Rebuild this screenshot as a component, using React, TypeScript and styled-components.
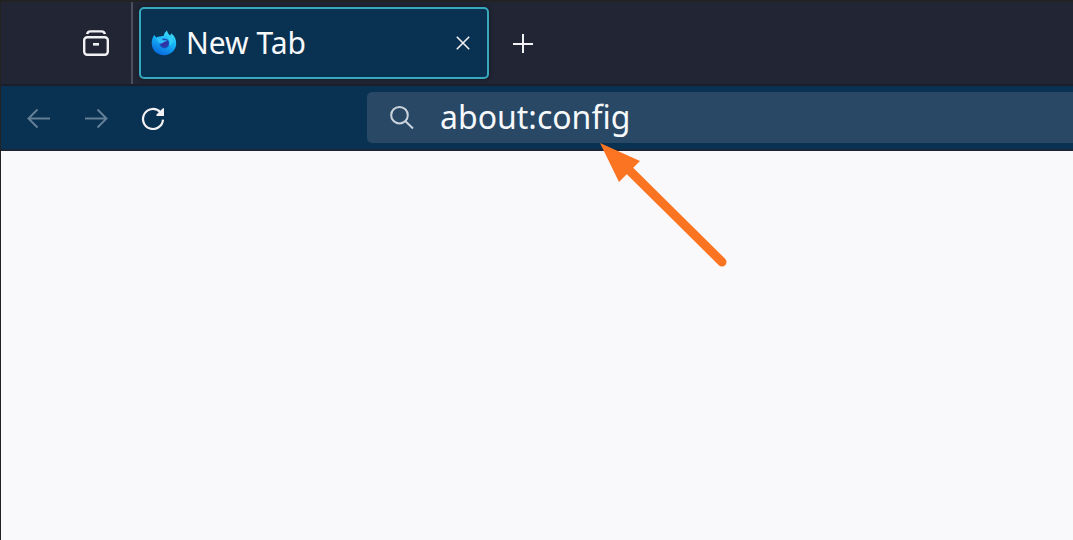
import React from "react";
import styled, { createGlobalStyle } from "styled-components";

const GlobalStyle = createGlobalStyle`
  *, *::before, *::after { box-sizing: border-box; }
  body {
    margin: 0;
    background: #f9f9fb;
    font-family: "Noto Sans", "Open Sans", sans-serif;
  }
`;

const Browser = styled.div`
  position: relative;
  display: flex;
  flex-direction: column;
  min-height: 100vh;
  overflow: hidden;
  border-top: 2px solid #222222;
  border-left: 1px solid #222222;
`;

const TabStrip = styled.header`
  display: flex;
  align-items: center;
  height: 84px;
  background: #212534;
  border-bottom: 2px solid #1a1e2b;
`;

const RecentArea = styled.div`
  display: flex;
  align-items: center;
  align-self: stretch;
  justify-content: flex-end;
  width: 132px;
  padding-right: 19px;
  border-right: 2px solid #4b4e5b;
`;

const IconButton = styled.button<{ $dim?: boolean }>`
  display: flex;
  align-items: center;
  justify-content: center;
  flex: none;
  width: 32px;
  height: 32px;
  padding: 0;
  border: 0;
  background: none;
  color: ${(p) => (p.$dim ? "#637f96" : "#f2f2f5")};
`;

const Tab = styled.div`
  display: flex;
  align-items: center;
  width: 350px;
  height: 72px;
  margin: 0 18px 0 6px;
  padding: 0 8px 0 10px;
  border: 2px solid #37a9bf;
  border-radius: 5px;
  background: #083152;
  box-shadow: 0 0 4px #141824;
`;

const TabTitle = styled.span`
  flex: 1;
  margin-left: 9px;
  color: #f6f8fa;
  font-size: 30px;
  line-height: 40px;
  white-space: nowrap;
`;

const Toolbar = styled.nav`
  display: flex;
  align-items: center;
  height: 65px;
  padding-left: 22px;
  background: #083152;
  border-bottom: 2px solid #1b2639;
`;

const NavButtons = styled.div`
  display: flex;
  flex: none;
  gap: 25px;
  width: 344px;
`;

const AddressBar = styled.label`
  display: flex;
  align-items: center;
  flex: 1;
  min-width: 0;
  height: 51px;
  padding-left: 19px;
  border-radius: 5px 0 0 5px;
  background: #284866;
  color: #cbd3dc;
`;

const AddressInput = styled.input`
  flex: 1;
  min-width: 0;
  height: 44px;
  margin: 0 0 2px 22px;
  padding: 0;
  border: 0;
  outline: 0;
  background: none;
  color: #f6f8fa;
  font-family: inherit;
  font-size: 32px;
  line-height: 44px;
`;

const Page = styled.main`
  flex: 1;
  background: #f9f9fb;
`;

const Pointer = styled.svg`
  position: absolute;
  top: 138px;
  left: 597px;
  pointer-events: none;
`;

const RecentIcon = () => (
  <svg width="32" height="32" viewBox="0 0 32 32" fill="none" stroke="currentColor" strokeWidth="2.4" aria-hidden="true">
    <path d="M7.2 7.2C7.4 5.2 8.6 4.4 10.4 4.4H21.6C23.4 4.4 24.6 5.2 24.8 7.2" />
    <rect x="4.2" y="10.2" width="23.6" height="17.6" rx="3" />
    <path d="M13 17.3H19" strokeWidth="2.6" />
  </svg>
);

const BrowserLogo = () => (
  <svg width="26" height="26" viewBox="0 0 26 26" aria-hidden="true">
    <defs>
      <linearGradient id="flame" x1="0.8" y1="0" x2="0.35" y2="1">
        <stop offset="0" stopColor="#47e4f6" />
        <stop offset="0.45" stopColor="#16b4f7" />
        <stop offset="1" stopColor="#0868dc" />
      </linearGradient>
      <radialGradient id="core">
        <stop offset="0" stopColor="#3f2ba8" />
        <stop offset="0.6" stopColor="#2a35a4" />
        <stop offset="1" stopColor="#1460c4" />
      </radialGradient>
    </defs>
    <path d="M3.4 5L5.2 7.6C6.6 6.6 8 6.3 9.4 6.5C10.6 6 11.6 5.9 12.6 6C13 4 14 2 16 .6C16.3 2.8 17.6 4.2 19.2 5.6C19.8 4.8 20 4 20 3.2C23.6 5.6 25.4 9.6 25.2 13.8C24.9 20.4 19.6 25.2 13 25.2C6.2 25.2 1 20.2 .7 13.7C.6 10.4 1.4 7.2 3.4 5Z" fill="url(#flame)" />
    <circle cx="13.4" cy="13.4" r="5" fill="url(#core)" />
    <path d="M5 8.6C7.8 7 10.8 8.2 12 10.2H15.8C15.2 11.9 13.2 11.5 12.2 12.6C11 14.2 9.4 13.2 8.2 13.6Z" fill="#2cbdf8" />
    <path d="M14.4 5.8C18.6 7.6 19.8 12 18 15.8C20.3 15 21.7 13 22 10.5C20.4 8.2 17.7 6.7 14.4 5.8Z" fill="#31cdf4" />
  </svg>
);

const CloseIcon = () => (
  <svg width="14" height="14" viewBox="0 0 14 14" stroke="currentColor" strokeWidth="1.6" aria-hidden="true">
    <path d="M.8 .8L13.2 13.2M13.2 .8L.8 13.2" />
  </svg>
);

const PlusIcon = () => (
  <svg width="20" height="20" viewBox="0 0 20 20" stroke="currentColor" strokeWidth="2" aria-hidden="true">
    <path d="M10 1V20M0 11H20" />
  </svg>
);

const ArrowIcon = ({ forward }: { forward?: boolean }) => (
  <svg width="24" height="24" viewBox="0 0 24 24" fill="none" stroke="currentColor" strokeWidth="2" aria-hidden="true">
    <path d={forward ? "M1 12.5H22M13.5 3.5L22.5 12.5L13.5 21.5" : "M23 12.5H2M10.5 3.5L1.5 12.5L10.5 21.5"} />
  </svg>
);

const ReloadIcon = () => (
  <svg width="24" height="24" viewBox="0 0 24 24" fill="none" stroke="currentColor" strokeWidth="2.2" aria-hidden="true">
    <path d="M19.4 6.2A10 10 0 1 0 22 13.6" />
    <path d="M23 2V10H16.4C15.3 10 15 9 15.8 8.2L21.6 2.4Z" fill="currentColor" stroke="none" />
  </svg>
);

const SearchIcon = () => (
  <svg width="32" height="32" viewBox="0 0 32 32" fill="none" stroke="currentColor" strokeWidth="2" aria-hidden="true">
    <circle cx="13.5" cy="13.2" r="8.3" />
    <path d="M19.5 19.2L27 26.5" />
  </svg>
);

export default function App() {
  return (
    <Browser>
      <GlobalStyle />
      <TabStrip>
        <RecentArea>
          <IconButton type="button" aria-label="Recent browsing">
            <RecentIcon />
          </IconButton>
        </RecentArea>
        <Tab>
          <BrowserLogo />
          <TabTitle>New Tab</TabTitle>
          <IconButton type="button" aria-label="Close tab">
            <CloseIcon />
          </IconButton>
        </Tab>
        <IconButton type="button" aria-label="Open a new tab">
          <PlusIcon />
        </IconButton>
      </TabStrip>
      <Toolbar aria-label="Navigation">
        <NavButtons>
          <IconButton type="button" aria-label="Back" $dim>
            <ArrowIcon />
          </IconButton>
          <IconButton type="button" aria-label="Forward" $dim>
            <ArrowIcon forward />
          </IconButton>
          <IconButton type="button" aria-label="Reload">
            <ReloadIcon />
          </IconButton>
        </NavButtons>
        <AddressBar>
          <SearchIcon />
          <AddressInput type="text" aria-label="Address" defaultValue="about:config" spellCheck={false} />
        </AddressBar>
      </Toolbar>
      <Page />
      <Pointer width="134" height="134" viewBox="0 0 134 134" aria-hidden="true">
        <path d="M28 27L124 122" stroke="#fb7421" strokeWidth="9" strokeLinecap="round" />
        <path d="M2 3L42 21L21 42Z" fill="#fb7421" />
      </Pointer>
    </Browser>
  );
}
